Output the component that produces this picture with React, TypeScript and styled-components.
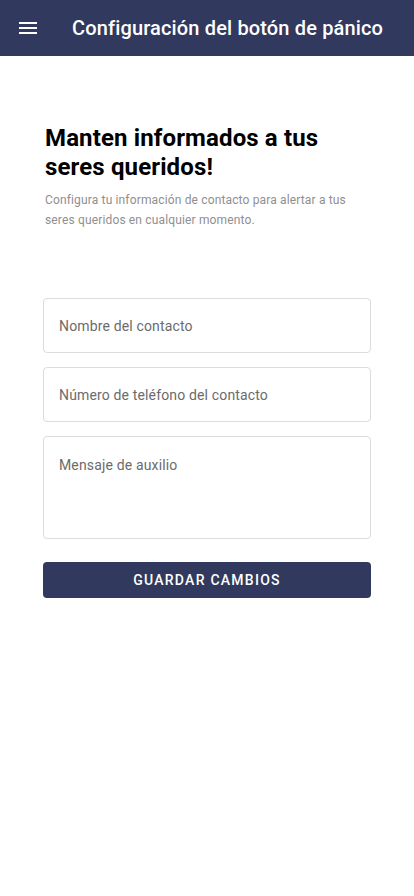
import React from "react";
import styled, { createGlobalStyle } from "styled-components";

const Global = createGlobalStyle`
  html, body { margin: 0; padding: 0; background: #fff; }
  body { font-family: Roboto, "Noto Sans", Arial, sans-serif; -webkit-font-smoothing: antialiased; }
  * { box-sizing: border-box; }
`;

const Page = styled.div`
  width: 414px;
  min-height: 896px;
  background: #fff;
  display: flex;
  flex-direction: column;
`;

const AppBar = styled.header`
  height: 56px;
  background: #32395e;
  display: flex;
  align-items: center;
  padding: 0 0 0 19px;
  gap: 35px;
`;

const MenuButton = styled.button`
  width: 18px;
  height: 18px;
  padding: 0;
  border: 0;
  background: transparent;
  display: flex;
  align-items: center;
  justify-content: center;
  cursor: pointer;
`;

const Title = styled.h1`
  margin: 0;
  color: #fff;
  font-size: 20px;
  font-weight: 500;
  letter-spacing: 0.15px;
  white-space: nowrap;
`;

const Content = styled.main`
  padding: 68px 43px 0 43px;
  display: flex;
  flex-direction: column;
`;

const Intro = styled.section`
  padding-left: 2px;
  display: flex;
  flex-direction: column;
  gap: 8px;
`;

const Heading = styled.h2`
  margin: 0;
  font-size: 24px;
  line-height: 29px;
  font-weight: 700;
  letter-spacing: 0.13px;
  color: #000;
`;

const Lead = styled.p`
  margin: 0;
  font-size: 12px;
  line-height: 20px;
  color: #8f8f8f;
  letter-spacing: 0.15px;
`;

const Form = styled.form`
  margin-top: 68px;
  display: flex;
  flex-direction: column;
  gap: 14px;
`;

const Field = styled.input`
  width: 100%;
  height: 55px;
  border: 1px solid #dcdcdc;
  border-radius: 4px;
  padding: 0 15px;
  font-family: inherit;
  font-size: 14px;
  letter-spacing: 0.15px;
  color: #333;
  outline: none;
  &::placeholder { color: #6b6b6b; }
`;

const Area = styled.textarea`
  width: 100%;
  height: 103px;
  border: 1px solid #dcdcdc;
  border-radius: 4px;
  padding: 18px 15px;
  font-family: inherit;
  font-size: 14px;
  line-height: 20px;
  letter-spacing: 0.15px;
  color: #333;
  resize: none;
  outline: none;
  &::placeholder { color: #6b6b6b; }
`;

const Submit = styled.button`
  margin-top: 9px;
  height: 36px;
  width: 100%;
  border: 0;
  border-radius: 4px;
  background: #32395e;
  color: #fff;
  font-family: inherit;
  font-size: 14px;
  font-weight: 500;
  letter-spacing: 1.25px;
  text-transform: uppercase;
  cursor: pointer;
`;

export default function App() {
  return (
    <Page>
      <Global />
      <AppBar>
        <MenuButton aria-label="menu">
          <svg width="18" height="12" viewBox="0 0 18 12">
            <rect x="0" y="0" width="18" height="2" fill="#fff" />
            <rect x="0" y="5" width="18" height="2" fill="#fff" />
            <rect x="0" y="10" width="18" height="2" fill="#fff" />
          </svg>
        </MenuButton>
        <Title>Configuración del botón de pánico</Title>
      </AppBar>
      <Content>
        <Intro>
          <Heading>Manten informados a tus seres queridos!</Heading>
          <Lead>
            Configura tu información de contacto para alertar a tus seres queridos en cualquier momento.
          </Lead>
        </Intro>
        <Form onSubmit={(e) => e.preventDefault()}>
          <Field placeholder="Nombre del contacto" />
          <Field placeholder="Número de teléfono del contacto" />
          <Area placeholder="Mensaje de auxilio" />
          <Submit type="submit">Guardar cambios</Submit>
        </Form>
      </Content>
    </Page>
  );
}
